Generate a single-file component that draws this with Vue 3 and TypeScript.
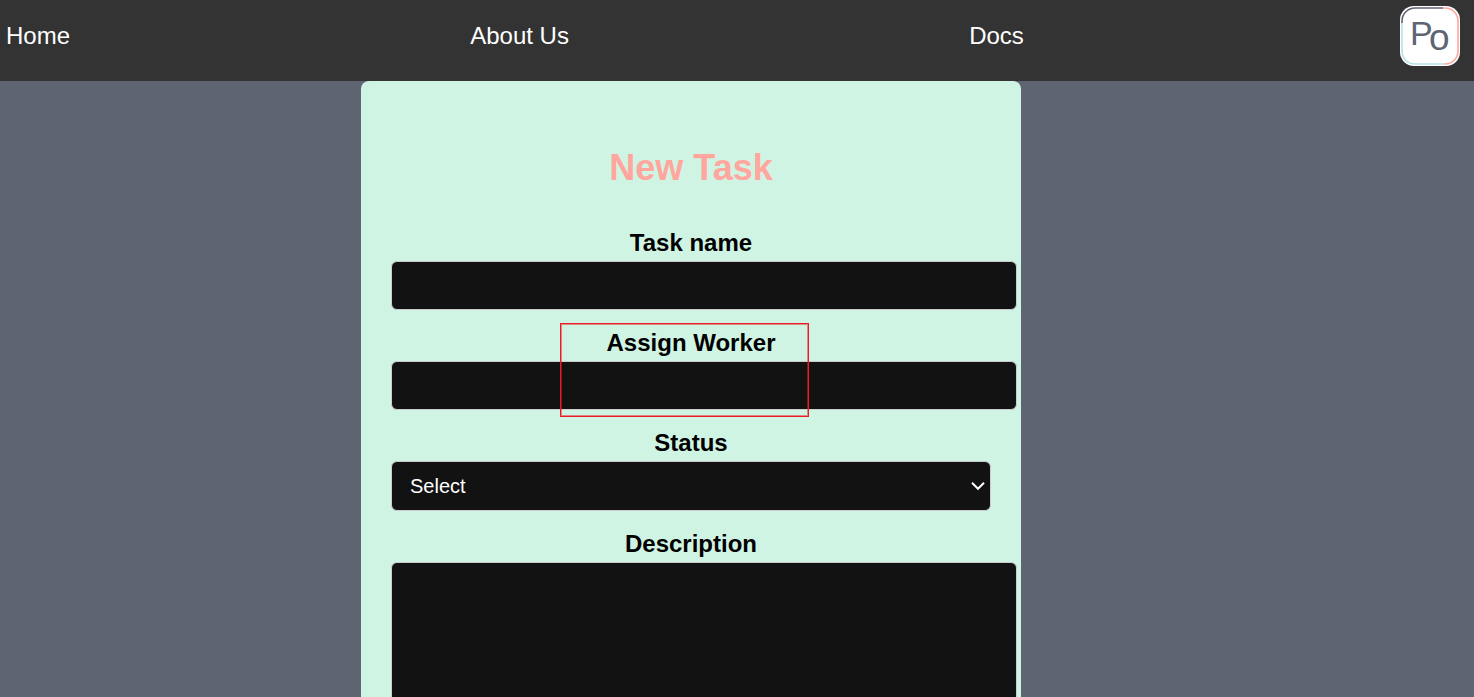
<script setup lang="ts">
import { ref } from 'vue'

interface NavLink {
  label: string
  href: string
}

const links: NavLink[] = [
  { label: 'Home', href: '#home' },
  { label: 'About Us', href: '#about' },
  { label: 'Docs', href: '#docs' },
]

const statuses: string[] = ['To Do', 'In Progress', 'Done']

const taskName = ref('')
const worker = ref('')
const status = ref('')
const description = ref('')
</script>

<template>
  <div class="page">
    <header>
      <nav class="navbar" aria-label="Main">
        <a v-for="link in links" :key="link.label" class="nav-link" :href="link.href">{{ link.label }}</a>
        <a class="logo" href="#top" aria-label="Po">
          <svg viewBox="0 0 60 60" width="60" height="60" fill="none" aria-hidden="true">
            <rect width="60" height="60" rx="14" fill="#fff" />
            <path d="M2 17V15A13 13 0 0 1 15 2H43" stroke="#5e6472" stroke-width="1.6" />
            <path d="M43 2H45A13 13 0 0 1 58 15V45A13 13 0 0 1 45 58H44" stroke="#ffa69e" stroke-width="1.6" />
            <path d="M44 58H15A13 13 0 0 1 2 45V17" stroke="#b8e0e6" stroke-width="1.6" />
            <text fill="#5e6472"><tspan x="10" y="39" font-size="34">P</tspan><tspan x="29" y="44" font-size="37">o</tspan></text>
          </svg>
        </a>
      </nav>
    </header>

    <main class="content">
      <form class="card" @submit.prevent>
        <h1 class="title">New Task</h1>
        <div class="field">
          <label for="task-name">Task name</label>
          <input id="task-name" v-model="taskName" class="control" type="text" />
        </div>
        <div class="field">
          <label for="worker">Assign Worker</label>
          <input id="worker" v-model="worker" class="control" type="text" />
          <span class="highlight" aria-hidden="true"></span>
        </div>
        <div class="field">
          <label for="status">Status</label>
          <select id="status" v-model="status" class="control select">
            <option value="">Select</option>
            <option v-for="item in statuses" :key="item" :value="item">{{ item }}</option>
          </select>
          <svg class="chevron" viewBox="0 0 14 10" width="14" height="10" aria-hidden="true">
            <path d="M1 1.8L7 7.8L13 1.8" fill="none" stroke="#fff" stroke-width="2" />
          </svg>
        </div>
        <div class="field">
          <label for="description">Description</label>
          <textarea id="description" v-model="description" class="control area"></textarea>
        </div>
      </form>
    </main>
  </div>
</template>

<style>
html {
  background: #5e6472;
  scrollbar-width: none;
}

body {
  margin: 0;
}
</style>

<style scoped>
.page {
  min-height: 100vh;
  background: #5e6472;
  font-family: 'Liberation Sans', Arial, sans-serif;
  font-size: 24px;
  line-height: 28px;
}

.navbar {
  display: flex;
  justify-content: space-between;
  background: #333;
  padding: 6px 14px 15px 6px;
}

.nav-link {
  padding: 16px 0;
  color: #fff;
  text-decoration: none;
}

.logo {
  height: 60px;
  margin-left: -24px;
}

.logo svg {
  display: block;
}

.content {
  display: flex;
  justify-content: center;
  padding-right: 92px;
}

.card {
  box-sizing: border-box;
  width: 100%;
  max-width: 660px;
  padding: 30px;
  border-radius: 8px;
  background: #d0f4e3;
}

.title {
  margin: 36px 0 40px;
  color: #ffa69e;
  font-size: 36px;
  line-height: 42px;
  text-align: center;
}

.field {
  position: relative;
  display: flex;
  flex-direction: column;
  margin-bottom: 19px;
}

label {
  margin-bottom: 4px;
  color: #000;
  font-weight: bold;
  text-align: center;
}

.control {
  width: 100%;
  height: 23px;
  padding: 12px;
  border: 1px solid #ccc;
  border-radius: 6px;
  background: #121212;
  color: #fff;
  font-family: inherit;
  font-size: 20px;
}

.select {
  box-sizing: border-box;
  height: 50px;
  padding-left: 18px;
  appearance: none;
}

.chevron {
  position: absolute;
  right: 6px;
  bottom: 20px;
  pointer-events: none;
}

.area {
  height: 200px;
  resize: none;
}

.highlight {
  position: absolute;
  top: -6px;
  left: 169px;
  box-sizing: border-box;
  width: 249px;
  height: 94px;
  border: 1px solid #ed1c24;
  box-shadow: inset 0 0 0 1px rgba(237, 28, 36, 0.5);
  pointer-events: none;
}
</style>
